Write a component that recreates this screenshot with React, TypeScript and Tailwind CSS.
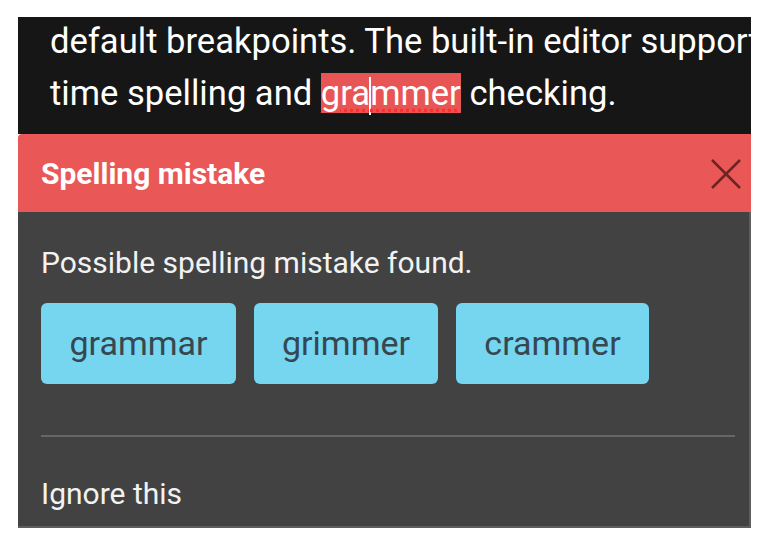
import React from "react";

export default function App() {
  return (
    <div className="w-[768px] h-[545px] bg-white overflow-hidden pt-[17px] pl-[18px]" style={{ fontFamily: "Roboto, 'Noto Sans', sans-serif" }}>
      <div className="w-[733px] flex flex-col">
        <div className="h-[117px] bg-[#161616] pl-[32px] overflow-hidden whitespace-nowrap text-white text-[34.6px] leading-[52px]">
          <div className="-mt-[2px]">default breakpoints. The built-in editor supports real-</div>
          <div>
            time spelling and{" "}
            <span className="relative bg-[#e85555] underline decoration-dotted decoration-[#ff3030] underline-offset-4">
              gra<span className="inline-block w-[2px] h-[38px] bg-white align-middle -mx-[1px]"></span>mmer
            </span>{" "}
            checking.
          </div>
        </div>
        <div className="h-[78px] bg-[#ea5757] rounded-tl-[4px] flex items-center justify-between pl-[23px] pr-[8px]">
          <span className="text-white font-bold text-[30px]">Spelling mistake</span>
          <svg width="34" height="34" viewBox="0 0 34 34" className="mt-[2px]">
            <path d="M3 3 L31 31 M31 3 L3 31" stroke="#6e2424" strokeWidth="2.5" fill="none" />
          </svg>
        </div>
        <div className="h-[316px] bg-[#424242] border-r-2 border-b-2 border-[#5e5e5e] pl-[23px] pr-[14px] pt-[34px] flex flex-col">
          <div className="text-[#f2f2f2] text-[30px] leading-[34px]">Possible spelling mistake found.</div>
          <div className="flex gap-[18px] mt-[23px]">
            <button className="w-[195px] h-[81px] rounded-[6px] bg-[#76d5ef] text-[#37474f] text-[34px]">grammar</button>
            <button className="w-[184px] h-[81px] rounded-[6px] bg-[#76d5ef] text-[#37474f] text-[34px]">grimmer</button>
            <button className="w-[193px] h-[81px] rounded-[6px] bg-[#76d5ef] text-[#37474f] text-[34px]">crammer</button>
          </div>
          <div className="h-[2px] bg-[#666666] mt-[51px]"></div>
          <div className="text-[#f2f2f2] text-[30px] leading-[34px] mt-[40px]">Ignore this</div>
        </div>
      </div>
    </div>
  );
}
